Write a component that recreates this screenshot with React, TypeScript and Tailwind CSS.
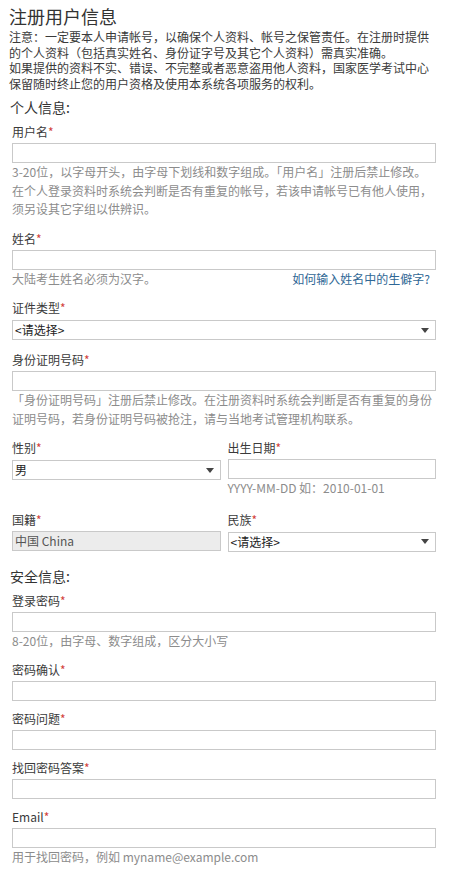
import React from 'react';

const FONT = { fontFamily: '"Noto Sans CJK SC", "Noto Sans", sans-serif' };

function Label({ text }: { text: string }) {
  return (
    <div className="text-[12px] leading-[20px] text-[#3a3a3a]">
      {text}
      <span className="text-[#d2413a]">*</span>
    </div>
  );
}

function TextBox({ value, readOnly }: { value?: string; readOnly?: boolean }) {
  return (
    <div
      className={`mt-[1px] h-[20px] border border-[#c9c9c9] px-[2px] text-[12px] leading-[18px] ${
        readOnly ? 'bg-[#ececec] text-[#555]' : 'bg-white text-[#222]'
      }`}
    >
      {value}
    </div>
  );
}

function SelectBox({ value }: { value: string }) {
  return (
    <div className="mt-[2px] flex h-[20px] items-center justify-between border border-[#c9c9c9] bg-white pl-[2px] pr-[6px] text-[12px] leading-[18px] text-[#222]">
      <span>{value}</span>
      <svg width="8" height="5" viewBox="0 0 8 5">
        <path d="M0 0 H8 L4 5 Z" fill="#444" />
      </svg>
    </div>
  );
}

function Hint({ children }: { children: React.ReactNode }) {
  return <div className="text-[12px] leading-[18.5px] text-[#8c8c8c]">{children}</div>;
}

function Field({
  label,
  select,
  hint,
  tight,
}: {
  label: string;
  select?: string;
  hint?: React.ReactNode;
  tight?: boolean;
}) {
  return (
    <div className={tight ? 'mb-[8px]' : 'mb-[10px]'}>
      <Label text={label} />
      {select ? <SelectBox value={select} /> : <TextBox />}
      {hint && <Hint>{hint}</Hint>}
    </div>
  );
}

export default function App() {
  return (
    <div className="min-h-screen w-[453px] bg-white pl-[9px] pr-[17px] pt-[4px] text-[#333]" style={FONT}>
      <h1 className="text-[18px] leading-[25px] text-[#333]">注册用户信息</h1>
      <p className="text-[12px] leading-[15.5px] text-[#3a3a3a]">
        注意：一定要本人申请帐号，以确保个人资料、帐号之保管责任。在注册时提供的个人资料（包括真实姓名、身份证字号及其它个人资料）需真实准确。
        <br />
        如果提供的资料不实、错误、不完整或者恶意盗用他人资料，国家医学考试中心保留随时终止您的用户资格及使用本系统各项服务的权利。
      </p>

      <h2 className="mt-[6px] ml-[1px] text-[14px] leading-[20px] text-[#333]">个人信息:</h2>

      <div className="mt-[5px] pl-[3px]">
        <Field
          label="用户名"
          hint="3-20位，以字母开头，由字母下划线和数字组成。「用户名」注册后禁止修改。在个人登录资料时系统会判断是否有重复的帐号，若该申请帐号已有他人使用，须另设其它字组以供辨识。"
        />
        <Field
          label="姓名"
          hint={
            <div className="flex justify-between pr-[6px]">
              <span>大陆考生姓名必须为汉字。</span>
              <span className="text-[#2f6795]">如何输入姓名中的生僻字?</span>
            </div>
          }
        />
        <Field label="证件类型" select="<请选择>" />
        <Field
          label="身份证明号码"
          hint="「身份证明号码」注册后禁止修改。在注册资料时系统会判断是否有重复的身份证明号码，若身份证明号码被抢注，请与当地考试管理机构联系。"
        />

        <div className="grid grid-cols-2 gap-x-[7px]">
          <Field label="性别" select="男" />
          <Field label="出生日期" hint="YYYY-MM-DD 如：2010-01-01" />
        </div>

        <div className="mt-[2px] grid grid-cols-2 gap-x-[7px]">
          <div className="mb-[10px]">
            <Label text="国籍" />
            <TextBox value="中国 China" readOnly />
          </div>
          <Field label="民族" select="<请选择>" />
        </div>
      </div>

      <h2 className="mt-[4px] ml-[1px] text-[14px] leading-[20px] text-[#333]">安全信息:</h2>

      <div className="mt-[5px] pl-[3px]">
        <Field label="登录密码" hint="8-20位，由字母、数字组成，区分大小写" />
        <Field label="密码确认" tight />
        <Field label="密码问题" tight />
        <Field label="找回密码答案" tight />
        <Field label="Email" hint="用于找回密码，例如 myname@example.com" />
      </div>
    </div>
  );
}
